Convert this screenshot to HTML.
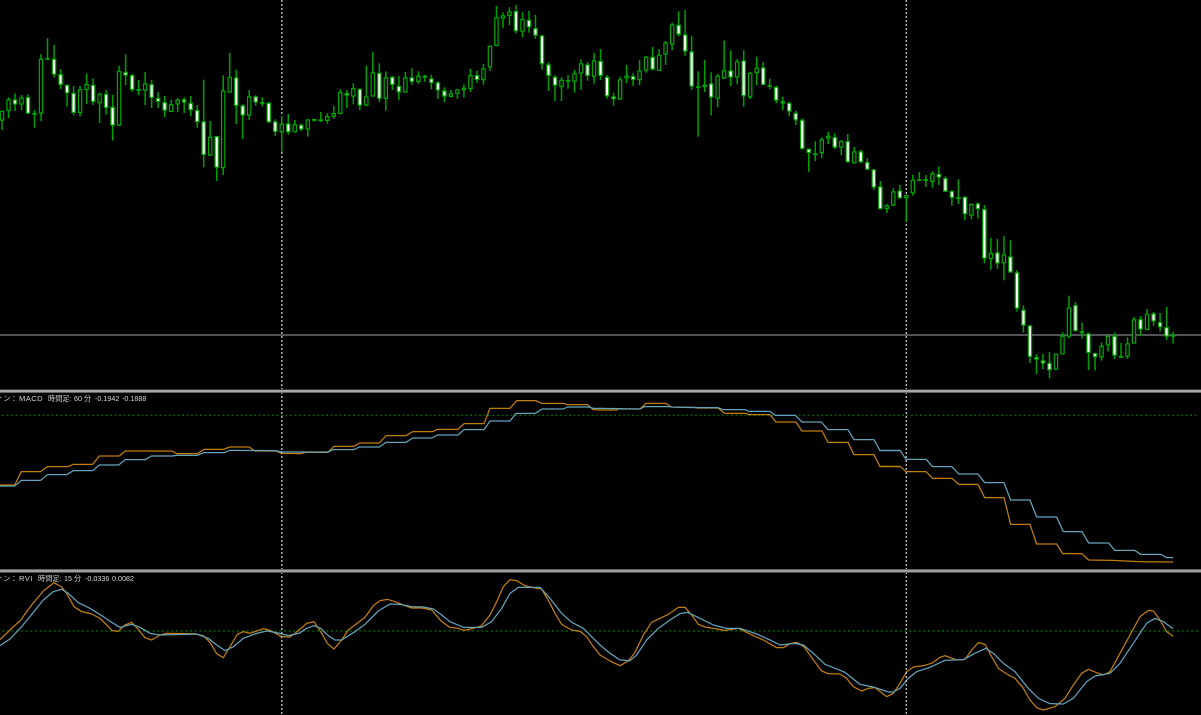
<!DOCTYPE html>
<html lang="ja">
<head>
<meta charset="utf-8">
<title>Chart</title>
<style>
html,body{margin:0;padding:0;background:#000;width:1201px;height:715px;overflow:hidden}
#c{position:absolute;left:0;top:0}
.t{position:absolute;font:7.2px/10px "Liberation Sans","Noto Sans CJK JP",sans-serif;color:#d4d4d4;white-space:nowrap}
.m{font-size:7.6px;letter-spacing:.4px}
.l{fill:none;stroke-width:1.25;stroke-linejoin:round;stroke-linecap:round;vector-effect:non-scaling-stroke}
.o{stroke:#c07e0e}
.b{stroke:#64a2ba}
</style>
</head>
<body>
<svg id="c" width="1201" height="715" viewBox="0 0 1201 715" xmlns="http://www.w3.org/2000/svg">
<rect width="1201" height="715" fill="#000"/>
<line x1="0" x2="1201" y1="335" y2="335" stroke="#6e6e76" stroke-width="1.5"/>
<line x1="2" x2="1199" y1="415.3" y2="415.3" stroke="#008000" stroke-width="1" stroke-dasharray="2 2.5"/>
<line x1="2" x2="1199" y1="631" y2="631" stroke="#006400" stroke-width="1.4" stroke-dasharray="2 2.7"/>
<g transform="translate(0,385) scale(.33333)">
<polyline class="l o" points="0,300 44,300 64,260 122,260 142,245 204,245 220,238 278,238 298,213 358,213 376,198 516,198 530,206 592,206 612,193 672,193 688,186 748,186 764,198 828,198 845,205 900,206"/>
<polyline class="l b" points="0,303 44,303 64,286 122,286 142,269 200,269 220,257 278,257 298,240 356,240 376,224 436,224 454,213 516,213 530,211 592,211 610,203 672,203 690,196 828,197 845,201 900,201"/>
</g>
<g transform="translate(300,385) scale(.33333)">
<polyline class="l o" points="0,206 18,202 84,202 102,184 162,184 178,174 238,174 258,152 318,152 338,140 398,140 412,133 474,133 492,116 552,116 570,70 630,70 650,47 708,47 724,55 790,55 802,59 862,59 880,74 900,75"/>
<polyline class="l b" points="0,201 84,201 100,194 162,194 178,186 238,186 258,172 318,172 338,159 396,159 412,150 474,150 492,134 552,134 570,108 630,108 648,85 706,85 726,72 790,72 802,66 866,66 880,70 900,70"/>
</g>
<g transform="translate(600,385) scale(.33333)">
<polyline class="l o" points="0,75 50,75 54,72 120,72 138,55 198,55 214,66 286,67 290,69 354,69 374,85 438,85 446,89 510,89 528,111 588,111 606,138 666,138 684,172 744,172 762,209 822,209 840,245 900,245"/>
<polyline class="l b" points="0,70 50,71 120,72 134,65 210,65 214,66 286,68 354,68 370,74 436,74 446,79 510,79 526,91 586,91 606,111 664,111 684,134 744,134 762,164 822,164 840,197 900,197"/>
</g>
<g transform="translate(880,440) scale(.33333)">
<polyline class="l o" points="0,79 60,79 78,95 138,95 158,115 216,115 236,133 294,133 314,173 372,173 392,253 450,253 470,312 530,312 548,341 606,341 626,360 696,361 776,365 878,366"/>
<polyline class="l b" points="0,31 60,31 78,58 138,58 158,80 216,80 236,102 294,102 314,128 372,128 392,180 450,180 470,231 530,231 550,275 606,275 626,309 686,309 704,331 764,331 782,343 842,343 860,353 878,353"/>
</g>
<g transform="translate(0,565) scale(.33333)">
<polyline class="l o" points="0,224 30,195 62,165 95,120 130,78 162,53 185,66 200,85 222,125 245,140 275,147 300,160 320,180 337,197 355,199 375,180 395,172 412,190 435,218 455,225 480,210 500,205 580,206 610,212 630,232 650,266 670,278 690,245 712,208 730,200 750,205 770,198 790,191 810,196 845,215 870,216 885,205 900,192"/>
<polyline class="l b" points="0,242 30,222 65,185 100,142 130,105 160,80 185,73 205,85 235,113 270,130 310,155 340,175 360,187 395,178 420,187 450,205 480,210 590,207 625,220 650,240 675,257 700,245 730,220 770,205 800,198 830,203 865,212 900,204"/>
</g>
<g transform="translate(300,565) scale(.33333)">
<polyline class="l o" points="0,193 20,175 42,170 62,200 82,235 102,252 125,225 145,195 175,172 195,157 220,122 240,107 262,103 285,110 310,120 335,129 365,129 395,135 425,170 450,187 475,190 490,196 520,190 545,182 570,150 590,110 610,65 630,44 650,47 675,62 700,68 725,72 750,115 765,145 785,178 815,195 840,199 860,215 880,245 900,270"/>
<polyline class="l b" points="0,203 20,190 42,182 62,190 85,212 105,225 125,225 165,200 195,178 235,138 270,117 300,118 335,125 370,126 400,132 425,150 450,170 490,187 545,187 575,170 605,130 630,85 655,67 720,67 750,100 785,145 815,172 850,190 880,220 900,240"/>
</g>
<g transform="translate(600,565) scale(.33333)">
<polyline class="l o" points="0,270 30,288 60,302 85,288 105,262 130,210 155,172 180,160 205,148 235,127 255,127 275,150 295,178 315,186 375,196 415,190 460,212 490,225 530,248 550,248 570,236 590,232 612,245 640,285 665,318 685,326 720,327 740,340 760,365 785,378 805,370 825,368 860,395 880,385 900,355"/>
<polyline class="l b" points="0,240 30,265 60,285 90,287 110,270 140,225 175,190 210,165 240,146 262,142 290,155 340,180 380,190 420,190 470,207 510,225 540,240 585,235 610,240 640,265 675,298 735,322 780,358 820,366 865,381 880,381 900,370"/>
</g>
<g transform="translate(900,565) scale(.33333)">
<polyline class="l o" points="0,355 20,320 40,306 70,302 95,295 120,277 135,272 170,285 195,283 215,255 235,233 255,238 275,275 295,310 320,327 345,340 370,370 390,405 410,428 430,435 465,425 495,400 520,360 545,325 565,313 590,323 610,330 630,320 660,265 690,210 720,155 745,136 760,138 780,165 800,200 818,213"/>
<polyline class="l b" points="0,370 25,340 50,320 90,307 135,286 190,284 225,265 258,250 280,265 310,295 345,320 385,370 415,400 450,416 490,417 520,400 560,350 585,333 630,325 660,295 700,235 740,175 765,160 790,170 818,190"/>
</g>
<line x1="281.8" x2="281.8" y1="0" y2="715" stroke="#c8c8c8" stroke-width="1.3" stroke-dasharray="2 2"/>
<line x1="906.3" x2="906.3" y1="0" y2="715" stroke="#c8c8c8" stroke-width="1.3" stroke-dasharray="2 2"/>
<g id="k"></g>
<rect x="0" y="389" width="1201" height="4" fill="#383838"/>
<rect x="0" y="390" width="1201" height="2.4" fill="#a8a8a8"/>
<rect x="0" y="569" width="1201" height="4" fill="#383838"/>
<rect x="0" y="569.6" width="1201" height="2.6" fill="#a0a0a0"/>
</svg>
<div class="t" style="left:-4px;top:394px">ィン：</div>
<div class="t m" style="left:19px;top:394px">MACD</div>
<div class="t" style="left:48px;top:394px">時間足:</div>
<div class="t" style="left:74px;top:394px">60 分</div>
<div class="t" style="left:95px;top:394px">-0.1942</div>
<div class="t" style="left:122px;top:394px">-0.1888</div>
<div class="t" style="left:-4px;top:574px">ィン：</div>
<div class="t m" style="left:19px;top:574px">RVI</div>
<div class="t" style="left:38px;top:574px">時間足:</div>
<div class="t" style="left:64px;top:574px">15 分</div>
<div class="t" style="left:85px;top:574px">-0.0336</div>
<div class="t" style="left:112px;top:574px">0.0082</div>
<script>
var d="332,390,332,362,0;292,354,298,333,0;280,333,298,314,1;285,330,292,314,0;283,341,291,341,1;330,383,339,341,1;162,363,176,341,0;114,180,174,178,1;135,232,176,224,1;207,268,222,255,1;253,320,254,280,1;258,346,278,339,1;258,349,268,339,0;220,312,252,270,0;235,315,254,306,1;278,369,281,310,0;270,344,281,324,1;285,422,320,377,1;197,378,213,377,0;163,255,215,227,1;222,275,225,270,1;240,286,267,270,1;216,315,250,272,0;240,324,252,294,1;276,324,293,306,1;288,351,306,332,1;300,336,313,336,0;295,336,298,314,0;292,339,298,308,1;288,348,308,331,1;315,383,330,367,1;239,502,364,465,1;363,468,410,467,0;407,543,408,503,1;226,525,271,505,0;159,278,230,278,0;209,372,232,318,1;313,417,316,347,1;270,360,289,347,0;286,317,289,308,1;292,319,306,309,1;306,369,308,367,1;358,407,364,396,1;348,455,371,397,0;342,404,370,397,1;360,398,373,397,0;370,394,374,389,1;358,410,358,389,0;356,365,357,361,1;336,366,358,364,1;340,371,348,363,0;318,356,339,351,0;268,343,276,342,0;270,324,279,287,1;250,313,264,290,0;265,330,266,317,1;197,318,289,317,0;155,290,217,290,0;190,307,218,297,1;214,332,232,297,0;228,270,230,255,1;228,300,257,277,1;216,278,232,278,0;205,254,232,246,1;214,251,227,246,0;224,246,227,233,1;224,268,235,250,1;243,297,247,272,1;262,307,271,290,1;270,292,280,291,0;268,296,268,282,0;253,293,263,271,0;207,276,225,267,0;212,249,225,240,1;192,254,205,241,0;136,213,137,202,0;17,139,52,138,0;37,84,46,56,0;22,76,34,48,0;15,100,33,94,1;37,112,57,95,0;33,98,59,82,1;45,117,84,107,1;105,209,106,193,1;187,273,193,228,1;225,303,230,257,1;232,303,239,261,0;225,266,240,245,1;210,278,220,245,0;178,270,190,221,0;186,242,193,228,1;159,251,181,231,0;147,240,182,228,1;225,296,230,289,1;278,317,289,298,1;230,299,238,299,0;195,249,227,235,0;220,258,228,240,1;180,256,211,241,0;168,218,170,212,0;141,211,170,209,1;147,213,164,213,0;123,195,127,164,0;68,151,73,134,0;34,109,74,104,1;30,168,103,155,1;108,270,154,260,1;214,410,259,261,1;180,276,254,261,0;217,346,250,293,1;222,322,227,296,0;122,237,211,236,0;151,258,211,233,1;177,253,184,233,0;151,320,181,289,1;215,297,218,292,0;170,256,203,219,0;186,256,202,255,1;236,268,255,260,1;257,310,260,302,1;290,330,304,311,1;305,349,308,335,1;332,375,338,361,1;356,449,359,447,1;445,515,446,459,1;424,483,460,465,1;412,475,418,460,0;395,432,407,416,0;400,447,411,443,1;420,465,423,443,0;402,488,423,487,1;441,491,454,490,0;449,490,454,487,1;475,510,486,509,1;507,570,508,563,1;243,328,259,328,1;312,339,316,327,0;264,318,274,317,0;255,296,271,295,1;284,365,285,295,0;224,287,239,280,0;216,241,238,240,1;225,261,237,243,1;214,263,220,246,0;199,255,221,233,1;229,276,234,275,1;270,317,273,294,1;238,312,292,297,1;288,360,290,343,1;310,358,312,347,0;307,356,310,328,1;315,490,327,476,1;414,509,459,477,0;417,506,457,491,1;408,541,463,490,0;421,518,469,518,1;510,635,517,626,1;616,698,629,677,1;675,789,676,771,1;763,822,771,779,1;762,807,781,791,1;756,834,788,811,1;760,810,761,809,0;697,763,707,763,0;587,716,622,710,0;606,694,615,694,1;668,716,694,700,1;698,810,700,759,1;758,812,759,772,1;727,782,737,772,0;706,755,707,736,0;697,777,707,767,1;729,770,768,770,1;712,777,730,770,0;651,731,658,731,0;648,709,657,689,1;627,691,641,690,0;636,678,640,665,1;639,695,666,682,1;621,720,681,710,1;695,731,705,709,0".split(";");
var s="";
for(var i=0;i<d.length;i++){
  var v=d[i].split(",").map(Number),o=i>=135?300:0,x=2+6.506*i;
  var hi=(v[0]+o)/3,lo=(v[1]+o)/3,t=(v[2]+o)/3,b=(v[3]+o)/3;
  s+='<line x1="'+x.toFixed(2)+'" x2="'+x.toFixed(2)+'" y1="'+hi.toFixed(1)+'" y2="'+lo.toFixed(1)+'" stroke="#00a000" stroke-width="1.5"/>';
  var h=Math.max(b-t-1.2,.6);
  s+='<rect x="'+(x-1.65).toFixed(2)+'" y="'+(t+.6).toFixed(1)+'" width="3.3" height="'+h.toFixed(1)+'" fill="'+(v[4]?'#fff':'#000')+'" stroke="#00a800" stroke-width="1.2"/>';
}
document.getElementById("k").innerHTML=s;
</script>
</body>
</html>
